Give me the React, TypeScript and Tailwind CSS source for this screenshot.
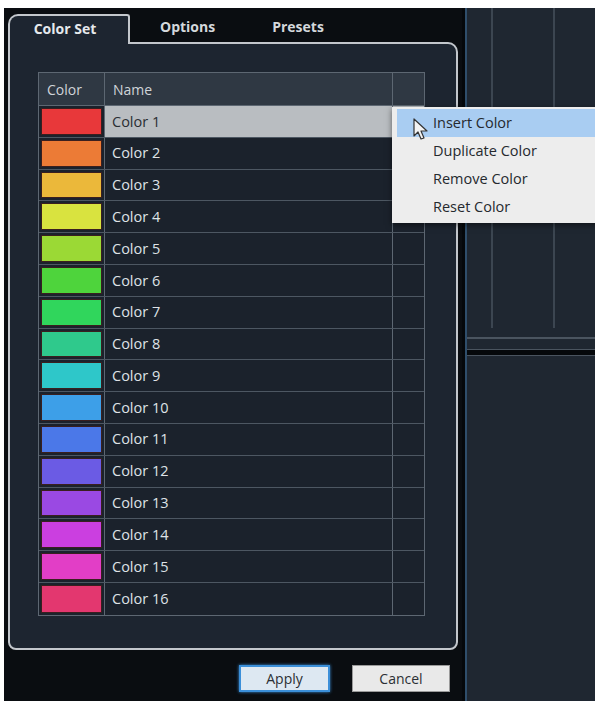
import { useState } from 'react'

const swatches = [
  '#e8383a', '#ec7b36', '#ebb83a', '#d9e33f', '#9bd935', '#4ed43c', '#30d65c', '#2fc98c',
  '#2ec7c9', '#3d9fe8', '#4b78e8', '#6b5be4', '#9a49e3', '#cb3fe0', '#e23ec6', '#e3376f',
]

const menuItems = ['Insert Color', 'Duplicate Color', 'Remove Color', 'Reset Color']

function Cursor() {
  return (
    <svg width="16" height="24" viewBox="0 0 16 24" className="absolute left-[21px] top-[11px]">
      <path d="M1 1 L1 18 L5 14 L8 21 L11 20 L8 13 L14 13 Z" fill="#f4f4f4" stroke="#333" strokeWidth="1.2" strokeLinejoin="round" />
    </svg>
  )
}

export default function App() {
  const [selected] = useState(0)

  return (
    <div className="w-[595px] h-[701px] bg-white flex flex-col overflow-hidden" style={{ fontFamily: '"Open Sans", "Noto Sans", sans-serif' }}>
      <div className="h-[8px] shrink-0" />
      <div className="flex flex-1 min-h-0">
        <div className="w-[4px] shrink-0" />

        {/* dialog */}
        <div className="w-[458px] shrink-0 bg-[#0a0d11] flex flex-col relative">
          {/* tabs */}
          <div className="flex items-end h-[34px] pl-[4px]">
            <div className="relative z-10 w-[122px] h-[30px] -mb-[2px] bg-[#1d2530] border-2 border-b-0 border-[#c3c7cc] rounded-tl-[10px] rounded-tr-[3px] flex items-center justify-center">
              <span className="text-[14px] font-bold text-[#e6e9ec] -mt-[4px] mr-[8px]">Color Set</span>
            </div>
            <div className="h-[28px] flex items-center">
              <span className="ml-[30px] text-[14px] font-bold text-[#d4d8dc] -mt-[4px]">Options</span>
              <span className="ml-[57px] text-[14px] font-bold text-[#d4d8dc] -mt-[4px]">Presets</span>
            </div>
          </div>

          {/* panel */}
          <div className="mx-[4px] h-[608px] bg-[#1d2530] border-2 border-[#c3c7cc] rounded-tr-[10px] rounded-b-[8px] pt-[28px] pl-[28px]">
            <div className="w-[387px] border border-[#5d6772]">
              <div className="flex h-[33px] bg-[#2f3843] border-b border-[#5d6772] text-[14px] text-[#cfd4d9]">
                <div className="w-[66px] border-r border-[#5d6772] flex items-center pl-[8px]">Color</div>
                <div className="w-[288px] border-r border-[#5d6772] flex items-center pl-[8px]">Name</div>
                <div className="flex-1" />
              </div>
              {swatches.map((c, i) => (
                <div key={c} className={`flex h-[31.8px] text-[14.5px] ${i < swatches.length - 1 ? 'border-b border-[#4d5762]' : ''}`}>
                  <div className="w-[66px] border-r border-[#5d6772] p-[2px] bg-[#1b222c]">
                    <div className="w-full h-full border border-[#3a1f1f]" style={{ background: c }} />
                  </div>
                  <div className={`w-[288px] border-r border-[#5d6772] flex items-center pl-[7px] ${i === selected ? 'bg-[#b9bdc1] text-[#2a2e33]' : 'bg-[#1b222c] text-[#dfe3e7]'}`}>
                    Color {i + 1}
                  </div>
                  <div className={`flex-1 ${i === selected ? 'bg-[#b9bdc1]' : 'bg-[#1b222c]'}`} />
                </div>
              ))}
            </div>
          </div>

          {/* buttons */}
          <div className="flex justify-end gap-[22px] pr-[12px] mt-[15px]">
            <button className="w-[91px] h-[27px] bg-[#dde8f2] border-2 border-[#3b8fd9] text-[14px] text-[#2b2f34] shadow-[0_0_3px_#3b8fd9]">Apply</button>
            <button className="w-[98px] h-[27px] bg-[#e9e9e9] border border-[#9a9a9a] text-[14px] text-[#2b2f34]">Cancel</button>
          </div>
        </div>

        {/* right background area */}
        <div className="flex-1 flex bg-[#1f2731]">
          <div className="w-[3px] bg-[#05080b]" />
          <div className="w-[2px] bg-[#2f4e6b]" />
          <div className="flex-1 flex flex-col">
            <div className="h-[320px] flex">
              <div className="w-[24px]" />
              <div className="w-[62px] border-l-2 border-[#3c4651]" />
              <div className="flex-1 border-l-2 border-[#3c4651]" />
            </div>
            <div className="h-[9px]" />
            <div className="h-[2px] bg-[#4a545f]" />
            <div className="h-[10px]" />
            <div className="h-[1px] bg-[#4a545f]" />
            <div className="h-[5px] bg-[#05080b]" />
            <div className="h-[1px] bg-[#4a545f]" />
            <div className="flex-1" />
          </div>
        </div>
      </div>

      {/* context menu */}
      <div className="absolute left-[392px] top-[107px] w-[212px] h-[116px] bg-[#ededed] shadow-[0_2px_6px_rgba(0,0,0,0.5)] pt-[2px] pl-[5px] text-[14.5px] text-[#25292e]">
        {menuItems.map((m, i) => (
          <div key={m} className={`h-[28px] flex items-center pl-[36px] ${i === 0 ? 'bg-[#a9cdf2]' : ''}`}>{m}</div>
        ))}
        <Cursor />
      </div>
    </div>
  )
}
